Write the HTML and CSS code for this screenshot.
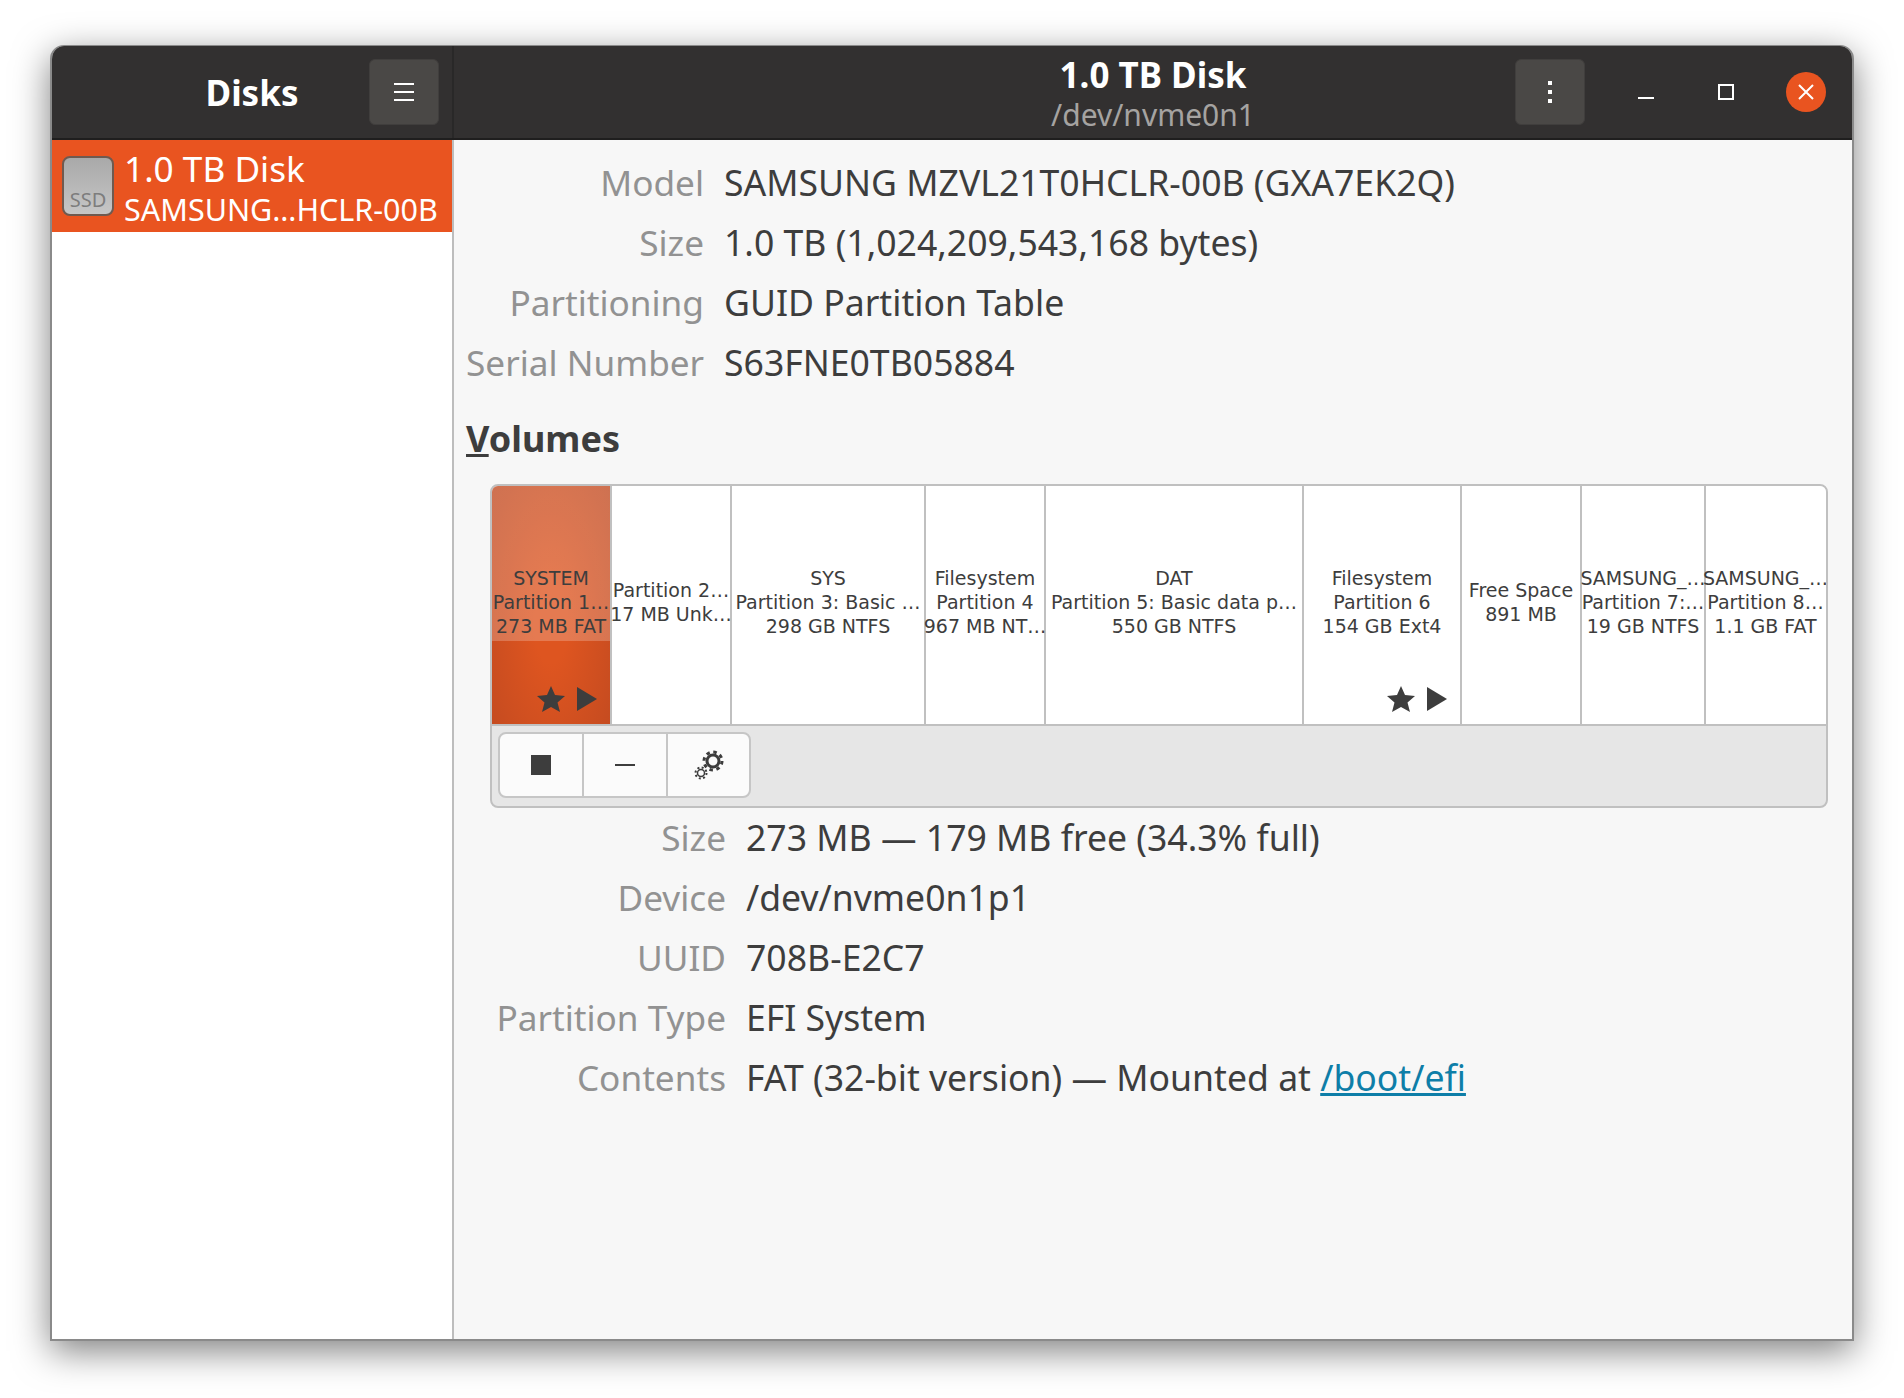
FILE: index.html
```html
<!DOCTYPE html>
<html>
<head>
  <title>Disks</title>
  <link rel="stylesheet" href="styles.css">
</head>
<body>
  <div class="window">
    <div class="headerbar">
      <div class="header-left">
        <span></span>
        <span class="app-title">Disks</span>
        <button class="head-btn menu-btn">
          <svg width="20" height="20" viewBox="0 0 20 20"><path d="M0 1h20v2H0zM0 9h20v2H0zM0 17h20v2H0z" fill="#fff"/></svg>
        </button>
      </div>
      <div class="header-right">
        <span></span>
        <div class="titles">
          <div class="disk-title">1.0 TB Disk</div>
          <div class="disk-sub">/dev/nvme0n1</div>
        </div>
        <div class="win-controls">
          <button class="head-btn">
            <svg width="6" height="22" viewBox="0 0 6 22"><path d="M1 0h4v4H1zM1 9h4v4H1zM1 18h4v4H1z" fill="#fff"/></svg>
          </button>
          <svg class="win-min" width="16" height="16" viewBox="0 0 16 16"><path d="M0 13h16v2H0z" fill="#fff"/></svg>
          <svg class="win-max" width="16" height="16" viewBox="0 0 16 16"><path d="M1 1h14v14H1z" fill="none" stroke="#fff" stroke-width="2"/></svg>
          <span class="win-close">
            <svg width="16" height="16" viewBox="0 0 16 16"><path d="M1 1l14 14M15 1L1 15" stroke="#fff" stroke-width="2"/></svg>
          </span>
        </div>
      </div>
    </div>

    <div class="content">
      <div class="sidebar">
        <div class="disk-row">
          <div class="ssd-icon">SSD</div>
          <div class="disk-row-text">
            <div class="disk-row-name">1.0 TB Disk</div>
            <div class="disk-row-model">SAMSUNG…HCLR-00B</div>
          </div>
        </div>
      </div>

      <div class="main">
        <div class="info info-top">
          <div class="key">Model</div><div class="val">SAMSUNG MZVL21T0HCLR-00B (GXA7EK2Q)</div>
          <div class="key">Size</div><div class="val">1.0 TB (1,024,209,543,168 bytes)</div>
          <div class="key">Partitioning</div><div class="val">GUID Partition Table</div>
          <div class="key">Serial Number</div><div class="val">S63FNE0TB05884</div>
        </div>

        <h2 class="volumes"><u>V</u>olumes</h2>

        <div class="vol-box">
          <div class="vol-strip">
            <div class="part selected" style="width:120px">
              <div>SYSTEM</div><div>Partition 1…</div><div>273 MB FAT</div>
              <div class="part-icons">
                <svg width="28" height="26" viewBox="0 0 28 26"><path d="M14 0l4 9 10 1-7.500 6.500L23 26l-9-5-9 5 2.500-9.500L0 10l10-1z" fill="#3d3d3d"/></svg>
                <svg width="20" height="24" viewBox="0 0 20 24"><path d="M0 0l20 12L0 24z" fill="#3d3d3d"/></svg>
              </div>
            </div>
            <div class="part" style="width:120px"><div>Partition 2…</div><div>17 MB Unk…</div></div>
            <div class="part" style="width:194px"><div>SYS</div><div>Partition 3: Basic …</div><div>298 GB NTFS</div></div>
            <div class="part" style="width:120px"><div>Filesystem</div><div>Partition 4</div><div>967 MB NT…</div></div>
            <div class="part" style="width:258px"><div>DAT</div><div>Partition 5: Basic data p…</div><div>550 GB NTFS</div></div>
            <div class="part" style="width:158px">
              <div>Filesystem</div><div>Partition 6</div><div>154 GB Ext4</div>
              <div class="part-icons">
                <svg width="28" height="26" viewBox="0 0 28 26"><path d="M14 0l4 9 10 1-7.500 6.500L23 26l-9-5-9 5 2.500-9.500L0 10l10-1z" fill="#3d3d3d"/></svg>
                <svg width="20" height="24" viewBox="0 0 20 24"><path d="M0 0l20 12L0 24z" fill="#3d3d3d"/></svg>
              </div>
            </div>
            <div class="part" style="width:120px"><div>Free Space</div><div>891 MB</div></div>
            <div class="part" style="width:124px"><div>SAMSUNG_…</div><div>Partition 7:…</div><div>19 GB NTFS</div></div>
            <div class="part" style="width:119px"><div>SAMSUNG_…</div><div>Partition 8…</div><div>1.1 GB FAT</div></div>
          </div>
          <div class="vol-toolbar">
            <div class="tool-group">
              <button class="tool-btn"><svg width="20" height="20" viewBox="0 0 20 20"><path d="M0 0h20v20H0z" fill="#3d3d3d"/></svg></button>
              <button class="tool-btn"><svg width="20" height="2" viewBox="0 0 20 2"><path d="M0 0h20v2H0z" fill="#3d3d3d"/></svg></button>
              <button class="tool-btn">
                <svg width="30" height="30" viewBox="0 0 30 30" fill="none" stroke="#3d3d3d">
                  <circle cx="19" cy="11" r="6" stroke-width="3"/>
                  <circle cx="19" cy="11" r="9" stroke-width="3" stroke-dasharray="3.500 3.570"/>
                  <circle cx="7" cy="23" r="3.500" stroke-width="1.500"/>
                  <circle cx="7" cy="23" r="5.500" stroke-width="2" stroke-dasharray="2 2.320"/>
                </svg>
              </button>
            </div>
          </div>
        </div>

        <div class="info info-bottom">
          <div class="key">Size</div><div class="val">273 MB — 179 MB free (34.3% full)</div>
          <div class="key">Device</div><div class="val">/dev/nvme0n1p1</div>
          <div class="key">UUID</div><div class="val">708B-E2C7</div>
          <div class="key">Partition Type</div><div class="val">EFI System</div>
          <div class="key">Contents</div><div class="val">FAT (32-bit version) — Mounted at <a href="#">/boot/efi</a></div>
        </div>
      </div>
    </div>
  </div>
</body>
</html>
```

FILE: styles.css
```css
* {
  box-sizing: border-box;
}

body {
  margin: 0;
  min-height: 1398px;
  padding: 45px 0 0 50px;
  background-color: #fff;
  font-family: "Noto Sans", sans-serif;
  color: #3d3d3d;
}

button {
  font: inherit;
  padding: 0;
  cursor: pointer;
}

.window {
  width: 1804px;
  height: 1296px;
  display: flex;
  flex-direction: column;
  border: 1px solid #8a8a8a;
  border-width: 1px 2px 2px 2px;
  border-radius: 14px 14px 0 0;
  background-color: #f7f7f7;
  box-shadow: 0 10px 36px rgba(0, 0, 0, 0.5);
  overflow: hidden;
}

/* header */
.headerbar {
  height: 94px;
  flex: none;
  display: flex;
  background-color: #323030;
  border-bottom: 2px solid #1f1e1e;
  color: #fff;
}

.header-left {
  width: 402px;
  display: grid;
  grid-template-columns: 1fr auto 1fr;
  align-items: center;
  border-right: 2px solid #292828;
}

.app-title {
  font-size: 35px;
  font-weight: 700;
}

.menu-btn {
  justify-self: end;
  margin-right: 13px;
}

.head-btn {
  width: 70px;
  height: 66px;
  display: flex;
  align-items: center;
  justify-content: center;
  background-color: #4a4846;
  border: 1px solid #403e3d;
  border-radius: 6px;
}

.header-right {
  flex: 1;
  display: grid;
  grid-template-columns: 1fr auto 1fr;
  align-items: center;
}

.titles {
  text-align: center;
  padding-top: 4px;
}

.disk-title {
  font-size: 35px;
  font-weight: 700;
  line-height: 42px;
}

.disk-sub {
  font-size: 30px;
  line-height: 38px;
  color: #a5a3a1;
}

.win-controls {
  justify-self: end;
  display: flex;
  align-items: center;
  padding-right: 26px;
}

.win-min {
  margin-left: 53px;
}

.win-max {
  margin-left: 64px;
}

.win-close {
  width: 40px;
  height: 40px;
  margin-left: 52px;
  display: flex;
  align-items: center;
  justify-content: center;
  border-radius: 50%;
  background-color: #e95420;
}

/* body of the window */
.content {
  flex: 1;
  display: flex;
  min-height: 0;
}

.sidebar {
  width: 402px;
  flex: none;
  background-color: #fff;
  border-right: 2px solid #bdbdbd;
}

.disk-row {
  height: 92px;
  display: flex;
  align-items: center;
  gap: 10px;
  padding-left: 10px;
  background-color: #e95420;
  color: #fff;
}

.ssd-icon {
  width: 52px;
  height: 60px;
  display: flex;
  align-items: flex-end;
  justify-content: center;
  padding-bottom: 1px;
  border: 2px solid #6f5a50;
  border-radius: 8px;
  background: linear-gradient(#a9a9a9, #c6c6c6);
  font-size: 20px;
  color: #7d7d7d;
}

.disk-row-text {
  padding-top: 2px;
}

.disk-row-name {
  font-size: 35.200px;
  line-height: 44px;
}

.disk-row-model {
  font-size: 30.500px;
  line-height: 38px;
  white-space: nowrap;
}

.main {
  flex: 1;
  padding: 12px 24px 0 12px;
}

.info {
  display: grid;
  column-gap: 20px;
  grid-auto-rows: 60px;
  font-size: 35.600px;
  align-items: center;
}

.info-top {
  grid-template-columns: 238px 1fr;
}

.info-bottom {
  grid-template-columns: 236px 1fr;
  margin-left: 24px;
  margin-top: -1px;
}

.key {
  font-size: 35.200px;
  text-align: right;
  color: #929292;
  white-space: nowrap;
}

.val {
  white-space: nowrap;
}

.val a {
  color: #0e7ea8;
}

.volumes {
  margin: 25px 0 23px;
  font-size: 36px;
  line-height: 44px;
  font-weight: 700;
}

/* partition map */
.vol-box {
  margin-left: 24px;
  border: 2px solid #c0c0c0;
  border-radius: 8px;
  background-color: #e6e6e6;
  overflow: hidden;
}

.vol-strip {
  height: 240px;
  display: flex;
  background-color: #fff;
  border-bottom: 2px solid #c0c0c0;
}

.part {
  position: relative;
  flex: none;
  display: flex;
  flex-direction: column;
  align-items: center;
  justify-content: center;
  padding-bottom: 6px;
  border-right: 2px solid #c0c0c0;
  font-family: "DejaVu Sans", sans-serif;
  font-size: 19px;
  line-height: 24px;
  white-space: nowrap;
}

.part:last-child {
  border-right: 0;
}

.part.selected {
  background:
    linear-gradient(rgba(255, 255, 255, 0.22) 155px, transparent 155px),
    radial-gradient(ellipse at 50% 58%, #de5520 20%, #bd4820 110%);
}

.part-icons {
  position: absolute;
  right: 13px;
  bottom: 12px;
  display: flex;
  align-items: center;
  gap: 12px;
}

.vol-toolbar {
  height: 80px;
  display: flex;
  align-items: center;
  padding: 0 0 2px 6px;
}

.tool-group {
  display: flex;
  border: 2px solid #c6c6c6;
  border-radius: 8px;
  background-color: #fbfbfb;
  overflow: hidden;
}

.tool-btn {
  width: 84px;
  height: 62px;
  display: flex;
  align-items: center;
  justify-content: center;
  background: none;
  border: 0;
  border-right: 2px solid #c6c6c6;
}

.tool-btn:last-child {
  width: 81px;
  border-right: 0;
}
```
